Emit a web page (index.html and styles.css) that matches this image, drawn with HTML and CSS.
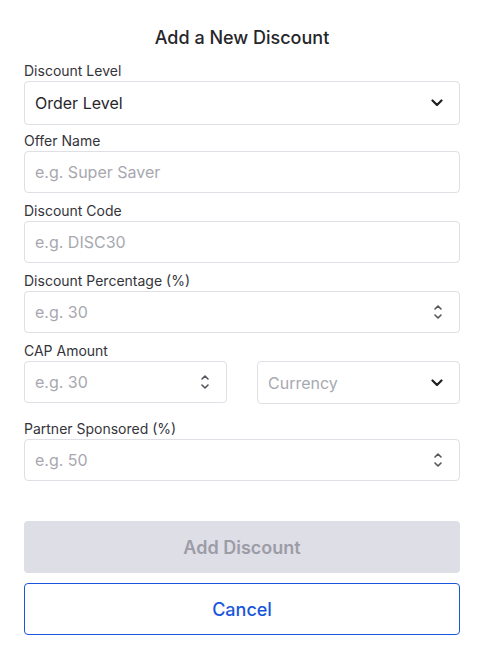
FILE: index.html
```html
<!DOCTYPE html>
<html>
<head>
<meta charset="utf-8">
<link rel="stylesheet" href="styles.css">
</head>
<body>
<div class="modal">
  <h2 class="title">Add a New Discount</h2>

  <div class="field first">
    <label class="label">Discount Level</label>
    <div class="box select">
      <span class="value">Order Level</span>
      <svg class="chev" width="12" height="8" viewBox="0 0 12 8"><path d="M1.5 1.5 L6 6 L10.5 1.5" fill="none" stroke="#1f1f24" stroke-width="2.2" stroke-linecap="round" stroke-linejoin="round"/></svg>
    </div>
  </div>

  <div class="field">
    <label class="label">Offer Name</label>
    <div class="box"><input class="inp" type="text" placeholder="e.g. Super Saver"></div>
  </div>

  <div class="field">
    <label class="label">Discount Code</label>
    <div class="box"><input class="inp" type="text" placeholder="e.g. DISC30"></div>
  </div>

  <div class="field">
    <label class="label">Discount Percentage (%)</label>
    <div class="box">
      <input class="inp" type="text" placeholder="e.g. 30">
      <svg class="spin" width="10" height="18" viewBox="0 0 10 18"><path d="M2 6 L5 3 L8 6 M2 12 L5 15 L8 12" fill="none" stroke="#55555c" stroke-width="1.6" stroke-linecap="round" stroke-linejoin="round"/></svg>
    </div>
  </div>

  <div class="field cap">
    <label class="label">CAP Amount</label>
    <div class="row">
      <div class="box">
        <input class="inp" type="text" placeholder="e.g. 30">
        <svg class="spin" width="10" height="18" viewBox="0 0 10 18"><path d="M2 6 L5 3 L8 6 M2 12 L5 15 L8 12" fill="none" stroke="#55555c" stroke-width="1.6" stroke-linecap="round" stroke-linejoin="round"/></svg>
      </div>
      <div class="box select">
        <span class="value ph">Currency</span>
        <svg class="chev" width="12" height="8" viewBox="0 0 12 8"><path d="M1.5 1.5 L6 6 L10.5 1.5" fill="none" stroke="#1f1f24" stroke-width="2.2" stroke-linecap="round" stroke-linejoin="round"/></svg>
      </div>
    </div>
  </div>

  <div class="field">
    <label class="label">Partner Sponsored (%)</label>
    <div class="box">
      <input class="inp" type="text" placeholder="e.g. 50">
      <svg class="spin" width="10" height="18" viewBox="0 0 10 18"><path d="M2 6 L5 3 L8 6 M2 12 L5 15 L8 12" fill="none" stroke="#55555c" stroke-width="1.6" stroke-linecap="round" stroke-linejoin="round"/></svg>
    </div>
  </div>

  <div class="actions">
    <button class="btn primary" disabled>Add Discount</button>
    <button class="btn outline">Cancel</button>
  </div>
</div>
</body>
</html>
```

FILE: styles.css
```css
* { box-sizing: border-box; }
html, body { margin: 0; padding: 0; background: #fff; }
body { font-family: Inter, "Noto Sans", "Liberation Sans", sans-serif; color: #222228; }

.modal { width: 485px; padding: 24px 25px 0 24px; }

.title {
  margin: 0 0 9px;
  font-size: 18px;
  font-weight: 500;
  line-height: 28px;
  text-align: center;
  color: #26262b;
}

.field { display: flex; flex-direction: column; margin-top: 8px; }
.field.first { margin-top: 0; }
.field.first + .field { margin-top: 6px; }
.field.cap + .field { margin-top: 15px; }

.label {
  font-size: 14px;
  line-height: 20px;
  color: #34343a;
}

.box {
  height: 42px;
  border: 1px solid #dfdfe5;
  border-radius: 4px;
  display: flex;
  align-items: center;
  padding: 0 14px 0 10px;
  background: #fff;
}
.box.select { height: 44px; padding-right: 16px; }
.row .box.select { height: 43px; }
.row .box { height: 42px; }

.value { flex: 1; font-size: 16px; color: #26262b; }
.value.ph { color: #a8a8b0; }

.inp {
  flex: 1;
  min-width: 0;
  border: none;
  outline: none;
  padding: 0;
  font-family: inherit;
  font-size: 16px;
  color: #26262b;
  background: transparent;
}
.inp::placeholder { color: #a8a8b0; }

.chev { flex: none; }
.spin { flex: none; margin-right: 2px; }

.row { display: grid; grid-template-columns: 203px 203px; column-gap: 30px; }

.actions { display: flex; flex-direction: column; gap: 10px; margin-top: 40px; }

.btn {
  height: 52px;
  width: 100%;
  border-radius: 4px;
  font-family: inherit;
  font-size: 18px;
  font-weight: 500;
  cursor: pointer;
}
.btn.primary { background: #dedee6; border: none; color: #9c9ca7; font-weight: 600; }
.btn.outline { background: #fff; border: 1px solid #1a56db; color: #1a56db; }
```
